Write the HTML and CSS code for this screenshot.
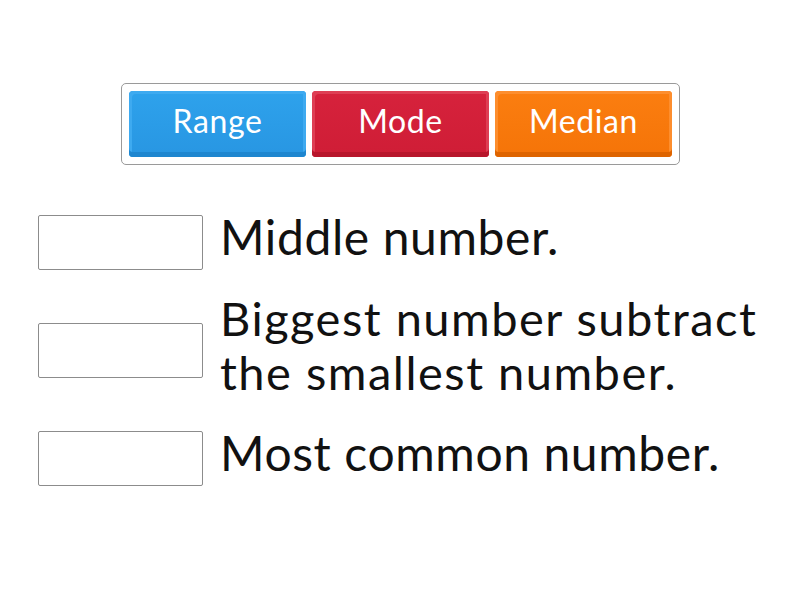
FILE: index.html
```html
<!DOCTYPE html>
<html>
<head>
<meta charset="utf-8">
<link rel="stylesheet" href="styles.css">
</head>
<body>
<div class="page">
  <div class="tiles">
    <div class="tile blue">Range</div>
    <div class="tile red">Mode</div>
    <div class="tile orange">Median</div>
  </div>
  <div class="rows">
    <div class="row"><div class="slot"></div><div class="label">Middle number.</div></div>
    <div class="row"><div class="slot"></div><div class="label label-two">Biggest number subtract<br>the smallest number.</div></div>
    <div class="row"><div class="slot"></div><div class="label">Most common number.</div></div>
  </div>
</div>
</body>
</html>
```
FILE: styles.css
```css
html, body {
  margin: 0;
  padding: 0;
  background: #ffffff;
}
body {
  font-family: Lato, "Open Sans", sans-serif;
  color: #111;
}
.page {
  width: 800px;
  height: 600px;
  padding-top: 83px;
  box-sizing: border-box;
}
.tiles {
  margin-left: 121px;
  width: 559px;
  height: 82px;
  box-sizing: border-box;
  border: 1px solid #9a9a9a;
  border-radius: 5px;
  padding: 7px;
  display: flex;
  gap: 6px;
}
.tile {
  flex: 1;
  height: 66px;
  border-radius: 4px;
  color: #fff;
  font-size: 32px;
  letter-spacing: 0.6px;
  display: flex;
  align-items: center;
  justify-content: center;
  padding-bottom: 8px;
  box-sizing: border-box;
}
.blue {
  background: linear-gradient(#2ea2ec, #2896e2);
  box-shadow: inset 0 -5px 0 #1e86cf, inset 3px 3px 0 #3eaaf0, inset -3px 0 0 #3eaaf0;
}
.red {
  background: linear-gradient(#d6223c, #cf1d36);
  box-shadow: inset 0 -5px 0 #b8162c, inset 3px 3px 0 #de3e54, inset -3px 0 0 #de3e54;
}
.orange {
  background: linear-gradient(#fb7e10, #f57408);
  box-shadow: inset 0 -5px 0 #de6400, inset 3px 3px 0 #fd8e2e, inset -3px 0 0 #fd8e2e;
}
.rows {
  margin-top: 47px;
  margin-left: 38px;
  display: flex;
  flex-direction: column;
  gap: 19px;
}
.row {
  display: flex;
  align-items: center;
  gap: 17px;
}
.slot {
  width: 165px;
  height: 55px;
  box-sizing: border-box;
  border: 1px solid #8c8c8c;
  border-radius: 2px;
  background: #fff;
  flex: none;
}
.label {
  font-size: 48px;
  line-height: 50px;
  letter-spacing: 0.6px;
  padding-bottom: 10px;
  color: #111;
}
.label-two {
  font-size: 47px;
  line-height: 54px;
  letter-spacing: 1.5px;
}
```
